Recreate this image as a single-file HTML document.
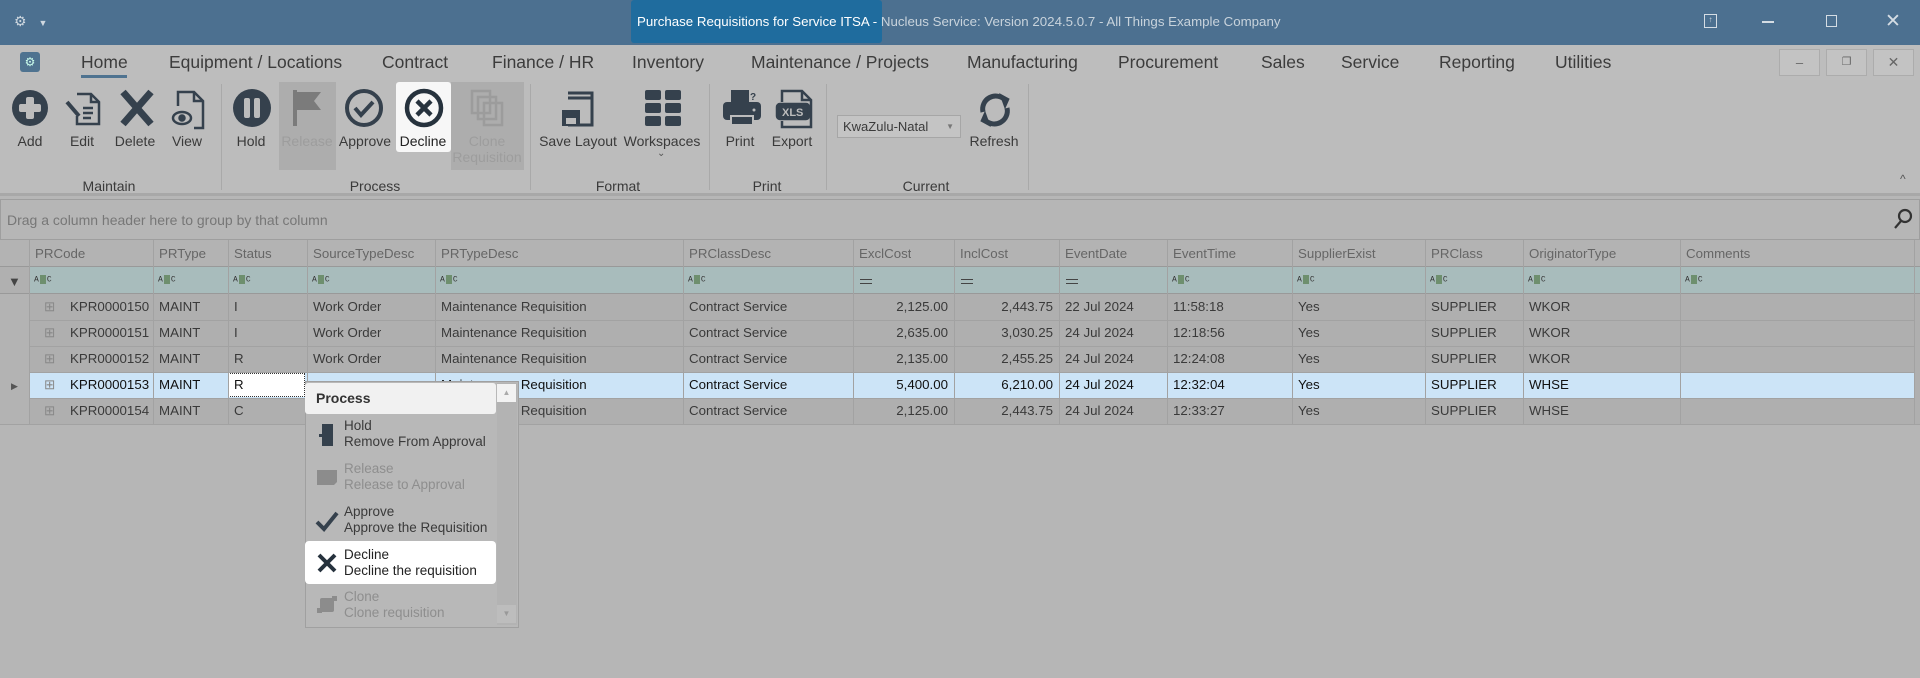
<!DOCTYPE html>
<html><head><meta charset="utf-8"><style>
*{box-sizing:border-box;margin:0;padding:0}
body{width:1920px;height:678px;overflow:hidden;background:#b6b6b6;font-family:"Liberation Sans",sans-serif;color:#3a3a3a;position:relative}
.a{position:absolute}
.title{left:0;top:0;width:1920px;height:45px;background:#4c7090}
.tabs{left:0;top:45px;width:1920px;height:35px;background:#bdbdbd}
.tab{position:absolute;top:52px;font-size:17.5px;color:#3c3c3c}
.rib{left:0;top:80px;width:1920px;height:116px;background:#bcbcbc;border-bottom:3px solid #a8a8a8}
.lbl{position:absolute;top:133px;font-size:14px;color:#3a3a3a;text-align:center;width:80px;margin-left:-40px}
.glbl{position:absolute;top:178px;font-size:14px;color:#3a3a3a;text-align:center;width:100px;margin-left:-50px}
.sep{position:absolute;top:84px;width:1px;height:106px;background:#a9a9a9}
.ic{position:absolute;top:88px}
.cell{position:absolute;font-size:13.3px;white-space:nowrap;overflow:hidden;padding-left:6px;line-height:26px;height:26px}
.r{text-align:right;padding-right:6px;padding-left:0}
.vl{position:absolute;width:1px;background:#a2a2a2}
.abc{display:inline-block;font-size:8px;font-family:"Liberation Mono",monospace;color:#333;vertical-align:middle}
.abc b{display:inline-block;width:6px;height:9px;background:#6e8f6e;margin:0 1px;vertical-align:middle}
.pm{position:absolute;font-size:13.5px;left:344px;line-height:16px}
</style></head><body>
<div class="a title"></div>
<div class="a" style="left:631px;top:0;width:251px;height:43px;background:#1f6c9e;border-radius:3px"></div>
<div class="a" style="left:14px;top:13px;font-size:14px;color:#cfd8e0">⚙ <span style="font-size:9px;margin-left:8px">▼</span></div>
<div class="a" style="left:637px;top:14px;font-size:13.3px;color:#fff;white-space:nowrap">Purchase Requisitions for Service ITSA - <span style="color:#c8d3dc">Nucleus Service: Version 2024.5.0.7 - All Things Example Company</span></div>
<div class="a" style="left:1704px;top:14px;width:13px;height:14px;border:1.5px solid #d5dde4;font-size:8px;color:#d5dde4;text-align:center;line-height:10px">↑</div>
<div class="a" style="left:1762px;top:21px;width:12px;height:1.5px;background:#d5dde4"></div>
<div class="a" style="left:1826px;top:15px;width:11px;height:12px;border:1.5px solid #d5dde4"></div>
<div class="a" style="left:1885px;top:10px;font-size:19px;color:#d5dde4">✕</div>

<div class="a tabs"></div>
<div class="a" style="left:20px;top:52px;width:20px;height:20px;background:#4f7390;border-radius:3px;color:#cfe;font-size:12px;text-align:center;line-height:20px">⚙</div>
<div class="tab" style="left:81px">Home</div>
<div class="a" style="left:81px;top:75px;width:46px;height:3px;background:#4f7390"></div>
<div class="tab" style="left:169px">Equipment / Locations</div>
<div class="tab" style="left:382px">Contract</div>
<div class="tab" style="left:492px">Finance / HR</div>
<div class="tab" style="left:632px">Inventory</div>
<div class="tab" style="left:751px">Maintenance / Projects</div>
<div class="tab" style="left:967px">Manufacturing</div>
<div class="tab" style="left:1118px">Procurement</div>
<div class="tab" style="left:1261px">Sales</div>
<div class="tab" style="left:1341px">Service</div>
<div class="tab" style="left:1439px">Reporting</div>
<div class="tab" style="left:1555px">Utilities</div>
<div class="a" style="left:1779px;top:49px;width:41px;height:27px;border:1px solid #acacac;background:#c3c3c3;text-align:center;font-size:13px;line-height:25px;color:#666">–</div>
<div class="a" style="left:1826px;top:49px;width:41px;height:27px;border:1px solid #acacac;background:#c3c3c3;text-align:center;font-size:11px;line-height:25px;color:#666">❐</div>
<div class="a" style="left:1873px;top:49px;width:41px;height:27px;border:1px solid #acacac;background:#c3c3c3;text-align:center;font-size:14px;line-height:25px;color:#666">✕</div>

<div class="a rib"></div>
<div class="a" style="left:279px;top:82px;width:57px;height:88px;background:#adadad"></div>
<div class="a" style="left:451px;top:82px;width:73px;height:88px;background:#adadad"></div>
<div class="a" style="left:396px;top:82px;width:55px;height:70px;background:#f7f7f7;border-radius:3px"></div>
<svg class="ic" style="left:11px" width="38" height="40" viewBox="0 0 38 40"><circle cx="19" cy="20" r="18" fill="#35414d"/><rect x="15" y="9" width="8" height="22" rx="2" fill="#bcbcbc"/><rect x="8" y="16" width="22" height="8" rx="2" fill="#bcbcbc"/></svg>
<svg class="ic" style="left:63px" width="40" height="40" viewBox="0 0 40 40" fill="none" stroke="#35414d" stroke-width="2.5"><path d="M14 6h14l8 8v22H14v-8"/><path d="M28 6v8h8"/><path d="M20 20h10M20 25h10M20 30h8"/><path d="M4 14l12 14" stroke-width="4"/></svg>
<svg class="ic" style="left:117px" width="40" height="40" viewBox="0 0 40 40"><path d="M6 4l28 32M34 4L6 36" stroke="#35414d" stroke-width="7"/></svg>
<svg class="ic" style="left:170px" width="36" height="42" viewBox="0 0 36 42" fill="none" stroke="#35414d" stroke-width="2.5"><path d="M8 18V4h16l9 9v27h-9"/><path d="M24 4v9h9"/><ellipse cx="12" cy="30" rx="9" ry="6"/><circle cx="12" cy="30" r="2.5" fill="#35414d"/></svg>
<svg class="ic" style="left:232px" width="40" height="40" viewBox="0 0 40 40"><circle cx="20" cy="20" r="19" fill="#35414d"/><rect x="12" y="10" width="6" height="20" rx="2" fill="#bcbcbc"/><rect x="22" y="10" width="6" height="20" rx="2" fill="#bcbcbc"/></svg>
<svg class="ic" style="left:290px" width="36" height="40" viewBox="0 0 36 40"><rect x="3" y="2" width="4" height="36" fill="#7b7b7b"/><path d="M7 4h24l-7 9 7 9H7z" fill="#7b7b7b"/></svg>
<svg class="ic" style="left:344px" width="40" height="40" viewBox="0 0 40 40" fill="none" stroke="#35414d"><circle cx="20" cy="20" r="17" stroke-width="4"/><path d="M11 20l6 7 12-13" stroke-width="4"/></svg>
<svg class="ic" style="left:404px" width="40" height="40" viewBox="0 0 40 40" fill="none" stroke="#26323d"><circle cx="20" cy="20" r="17" stroke-width="4.5"/><path d="M13 13l14 14M27 13L13 27" stroke-width="4.5"/></svg>
<svg class="ic" style="left:468px" width="40" height="42" viewBox="0 0 40 42" fill="none" stroke="#9c9c9c" stroke-width="2.5"><rect x="4" y="3" width="18" height="22"/><rect x="10" y="9" width="18" height="22"/><rect x="16" y="15" width="18" height="22"/></svg>
<svg class="ic" style="left:558px" width="38" height="42" viewBox="0 0 38 42" fill="none" stroke="#35414d" stroke-width="3"><path d="M10 5h24v32H10"/><path d="M10 5h24v5H10"/><rect x="4" y="22" width="18" height="16" fill="#35414d" stroke="none"/><rect x="8" y="30" width="10" height="6" fill="#bcbcbc" stroke="none"/></svg>
<svg class="ic" style="left:643px" width="40" height="40" viewBox="0 0 40 40" fill="#35414d"><rect x="2" y="2" width="16" height="10" rx="2"/><rect x="22" y="2" width="16" height="10" rx="2"/><rect x="2" y="15" width="16" height="10" rx="2"/><rect x="22" y="15" width="16" height="10" rx="2"/><rect x="2" y="28" width="16" height="10" rx="2"/><rect x="22" y="28" width="16" height="10" rx="2"/></svg>
<svg class="ic" style="left:721px" width="42" height="40" viewBox="0 0 42 40" fill="#35414d"><rect x="10" y="2" width="18" height="12"/><rect x="2" y="14" width="38" height="18" rx="4"/><rect x="10" y="28" width="22" height="9" fill="#35414d" stroke="#bcbcbc" stroke-width="2"/><text x="29" y="12" font-size="10" font-family="Liberation Sans" font-weight="bold">?</text><circle cx="33" cy="22" r="1.5" fill="#bcbcbc"/></svg>
<svg class="ic" style="left:774px" width="40" height="42" viewBox="0 0 40 42" fill="none" stroke="#35414d" stroke-width="2.5"><path d="M8 14V3h20l9 9v27H8v-6"/><path d="M28 3v9h9"/><rect x="3" y="16" width="32" height="15" rx="3" fill="#35414d"/><text x="8" y="28" font-size="11" font-weight="bold" font-family="Liberation Sans" fill="#bcbcbc" stroke="none">XLS</text></svg>
<svg class="ic" style="left:975px;top:90px" width="40" height="40" viewBox="0 0 40 40" fill="none" stroke="#35414d" stroke-width="5"><path d="M8 22A13 13 0 0 1 30 10"/><path d="M32 18A13 13 0 0 1 10 30"/><path d="M25 4l9 5-4 9z" fill="#35414d" stroke-width="1"/><path d="M15 36l-9-5 4-9z" fill="#35414d" stroke-width="1"/></svg>
<div class="a" style="left:837px;top:115px;width:124px;height:23px;border:1px solid #a6a6a6;background:#c4c4c4;font-size:13px;line-height:21px;padding-left:5px">KwaZulu-Natal<span style="position:absolute;right:6px;font-size:8px;color:#777">▼</span></div>
<div class="lbl" style="left:30px">Add</div>
<div class="lbl" style="left:82px">Edit</div>
<div class="lbl" style="left:135px">Delete</div>
<div class="lbl" style="left:187px">View</div>
<div class="lbl" style="left:251px">Hold</div>
<div class="lbl" style="left:307px;color:#9d9d9d">Release</div>
<div class="lbl" style="left:365px">Approve</div>
<div class="lbl" style="left:423px;color:#222">Decline</div>
<div class="lbl" style="left:487px;color:#9d9d9d;line-height:16px;top:133px">Clone<br>Requisition</div>
<div class="lbl" style="left:578px">Save Layout</div>
<div class="lbl" style="left:662px">Workspaces</div>
<div class="a" style="left:657px;top:148px;font-size:10px;color:#555">⌄</div>
<div class="lbl" style="left:740px">Print</div>
<div class="lbl" style="left:792px">Export</div>
<div class="lbl" style="left:994px">Refresh</div>
<div class="sep" style="left:221px"></div><div class="sep" style="left:530px"></div><div class="sep" style="left:709px"></div><div class="sep" style="left:826px"></div><div class="sep" style="left:1028px"></div>
<div class="glbl" style="left:109px">Maintain</div>
<div class="glbl" style="left:375px">Process</div>
<div class="glbl" style="left:618px">Format</div>
<div class="glbl" style="left:767px">Print</div>
<div class="glbl" style="left:926px">Current</div>
<div class="a" style="left:1900px;top:172px;font-size:12px;color:#555">^</div>

<div class="a" style="left:0;top:199px;width:1920px;height:41px;background:#b6b6b6;border:1px solid #9e9e9e"></div>
<div class="a" style="left:7px;top:212px;font-size:14px;color:#777">Drag a column header here to group by that column</div>
<svg class="a" style="left:1893px;top:208px" width="20" height="22" viewBox="0 0 20 22" fill="none" stroke="#333" stroke-width="2.2"><circle cx="12" cy="8" r="6"/><path d="M8 13l-6 7"/></svg>

<div class="a" style="left:0;top:240px;width:1920px;height:27px;background:#b3b3b3;border-bottom:1px solid #999"></div>
<div class="a" style="left:0;top:267px;width:1920px;height:27px;background:#a8bcbc;border-bottom:1px solid #999"></div>
<div class="a" style="left:0;top:267px;width:29px;height:27px;background:#b0b0b0;border-bottom:1px solid #999"></div>
<div class="a" style="left:0;top:294px;width:1920px;height:130px;background:#afafaf"></div>
<div class="a" style="left:0;top:294px;width:29px;height:130px;background:#b3b3b3"></div>
<div class="a" style="left:29px;top:372px;width:1885px;height:26px;background:#cce4f7"></div>
<div class="a" style="left:228px;top:373px;width:77px;height:24px;background:#fff;border:1px dotted #333"></div>
<div class="a" style="left:11px;top:381px;font-size:9px;color:#555">▶</div>
<div class="a" style="left:8px;top:274px;font-size:13px;color:#444">▼</div>

<div class="a" style="left:0;top:241px;width:1920px;height:183px">
<div class="cell" style="left:29px;top:0;color:#666">PRCode</div>
<div class="cell" style="left:153px;top:0;color:#666">PRType</div>
<div class="cell" style="left:228px;top:0;color:#666">Status</div>
<div class="cell" style="left:307px;top:0;color:#666">SourceTypeDesc</div>
<div class="cell" style="left:435px;top:0;color:#666">PRTypeDesc</div>
<div class="cell" style="left:683px;top:0;color:#666">PRClassDesc</div>
<div class="cell" style="left:853px;top:0;color:#666">ExclCost</div>
<div class="cell" style="left:954px;top:0;color:#666">InclCost</div>
<div class="cell" style="left:1059px;top:0;color:#666">EventDate</div>
<div class="cell" style="left:1167px;top:0;color:#666">EventTime</div>
<div class="cell" style="left:1292px;top:0;color:#666">SupplierExist</div>
<div class="cell" style="left:1425px;top:0;color:#666">PRClass</div>
<div class="cell" style="left:1523px;top:0;color:#666">OriginatorType</div>
<div class="cell" style="left:1680px;top:0;color:#666">Comments</div>
</div>
<div class="a" style="left:0;top:267px;width:1920px;height:27px;font-size:9px">
<span class="a abc" style="left:34px;top:8px">A<b></b>C</span><span class="a abc" style="left:158px;top:8px">A<b></b>C</span><span class="a abc" style="left:233px;top:8px">A<b></b>C</span><span class="a abc" style="left:312px;top:8px">A<b></b>C</span><span class="a abc" style="left:440px;top:8px">A<b></b>C</span><span class="a abc" style="left:688px;top:8px">A<b></b>C</span>
<span class="a" style="left:860px;top:12px;width:12px;height:5px;border-top:1.5px solid #444;border-bottom:1.5px solid #444"></span><span class="a" style="left:961px;top:12px;width:12px;height:5px;border-top:1.5px solid #444;border-bottom:1.5px solid #444"></span><span class="a" style="left:1066px;top:12px;width:12px;height:5px;border-top:1.5px solid #444;border-bottom:1.5px solid #444"></span>
<span class="a abc" style="left:1172px;top:8px">A<b></b>C</span><span class="a abc" style="left:1297px;top:8px">A<b></b>C</span><span class="a abc" style="left:1430px;top:8px">A<b></b>C</span><span class="a abc" style="left:1528px;top:8px">A<b></b>C</span><span class="a abc" style="left:1685px;top:8px">A<b></b>C</span>
</div>

<div class="vl" style="left:29px;top:240px;height:184px"></div><div class="vl" style="left:153px;top:240px;height:184px"></div><div class="vl" style="left:228px;top:240px;height:184px"></div><div class="vl" style="left:307px;top:240px;height:184px"></div><div class="vl" style="left:435px;top:240px;height:184px"></div><div class="vl" style="left:683px;top:240px;height:184px"></div><div class="vl" style="left:853px;top:240px;height:184px"></div><div class="vl" style="left:954px;top:240px;height:184px"></div><div class="vl" style="left:1059px;top:240px;height:184px"></div><div class="vl" style="left:1167px;top:240px;height:184px"></div><div class="vl" style="left:1292px;top:240px;height:184px"></div><div class="vl" style="left:1425px;top:240px;height:184px"></div><div class="vl" style="left:1523px;top:240px;height:184px"></div><div class="vl" style="left:1680px;top:240px;height:184px"></div><div class="vl" style="left:1914px;top:240px;height:184px"></div>
<div class="a" style="left:29px;top:320px;width:1885px;height:1px;background:#a2a2a2"></div>
<div class="a" style="left:29px;top:346px;width:1885px;height:1px;background:#a2a2a2"></div>
<div class="a" style="left:29px;top:372px;width:1885px;height:1px;background:#a2a2a2"></div>
<div class="a" style="left:29px;top:398px;width:1885px;height:1px;background:#a2a2a2"></div>
<div class="a" style="left:0;top:424px;width:1920px;height:1px;background:#a2a2a2"></div>

<div class="a" style="left:0;top:294px;width:1920px">
<div class="cell" style="left:38px;top:0;color:#888">⊞</div><div class="cell" style="left:64px;top:0">KPR0000150</div><div class="cell" style="left:153px;top:0">MAINT</div><div class="cell" style="left:228px;top:0">I</div><div class="cell" style="left:307px;top:0">Work Order</div><div class="cell" style="left:435px;top:0">Maintenance Requisition</div><div class="cell" style="left:683px;top:0">Contract Service</div><div class="cell r" style="left:853px;top:0;width:101px">2,125.00</div><div class="cell r" style="left:954px;top:0;width:105px">2,443.75</div><div class="cell" style="left:1059px;top:0">22 Jul 2024</div><div class="cell" style="left:1167px;top:0">11:58:18</div><div class="cell" style="left:1292px;top:0">Yes</div><div class="cell" style="left:1425px;top:0">SUPPLIER</div><div class="cell" style="left:1523px;top:0">WKOR</div>

<div class="cell" style="left:38px;top:26px;color:#888">⊞</div><div class="cell" style="left:64px;top:26px">KPR0000151</div><div class="cell" style="left:153px;top:26px">MAINT</div><div class="cell" style="left:228px;top:26px">I</div><div class="cell" style="left:307px;top:26px">Work Order</div><div class="cell" style="left:435px;top:26px">Maintenance Requisition</div><div class="cell" style="left:683px;top:26px">Contract Service</div><div class="cell r" style="left:853px;top:26px;width:101px">2,635.00</div><div class="cell r" style="left:954px;top:26px;width:105px">3,030.25</div><div class="cell" style="left:1059px;top:26px">24 Jul 2024</div><div class="cell" style="left:1167px;top:26px">12:18:56</div><div class="cell" style="left:1292px;top:26px">Yes</div><div class="cell" style="left:1425px;top:26px">SUPPLIER</div><div class="cell" style="left:1523px;top:26px">WKOR</div>

<div class="cell" style="left:38px;top:52px;color:#888">⊞</div><div class="cell" style="left:64px;top:52px">KPR0000152</div><div class="cell" style="left:153px;top:52px">MAINT</div><div class="cell" style="left:228px;top:52px">R</div><div class="cell" style="left:307px;top:52px">Work Order</div><div class="cell" style="left:435px;top:52px">Maintenance Requisition</div><div class="cell" style="left:683px;top:52px">Contract Service</div><div class="cell r" style="left:853px;top:52px;width:101px">2,135.00</div><div class="cell r" style="left:954px;top:52px;width:105px">2,455.25</div><div class="cell" style="left:1059px;top:52px">24 Jul 2024</div><div class="cell" style="left:1167px;top:52px">12:24:08</div><div class="cell" style="left:1292px;top:52px">Yes</div><div class="cell" style="left:1425px;top:52px">SUPPLIER</div><div class="cell" style="left:1523px;top:52px">WKOR</div>

<div style="color:#111">
<div class="cell" style="left:38px;top:78px;color:#888">⊞</div><div class="cell" style="left:64px;top:78px">KPR0000153</div><div class="cell" style="left:153px;top:78px">MAINT</div><div class="cell" style="left:228px;top:78px">R</div><div class="cell" style="left:435px;top:78px">Maintenance Requisition</div><div class="cell" style="left:683px;top:78px">Contract Service</div><div class="cell r" style="left:853px;top:78px;width:101px">5,400.00</div><div class="cell r" style="left:954px;top:78px;width:105px">6,210.00</div><div class="cell" style="left:1059px;top:78px">24 Jul 2024</div><div class="cell" style="left:1167px;top:78px">12:32:04</div><div class="cell" style="left:1292px;top:78px">Yes</div><div class="cell" style="left:1425px;top:78px">SUPPLIER</div><div class="cell" style="left:1523px;top:78px">WHSE</div>
</div>

<div class="cell" style="left:38px;top:104px;color:#888">⊞</div><div class="cell" style="left:64px;top:104px">KPR0000154</div><div class="cell" style="left:153px;top:104px">MAINT</div><div class="cell" style="left:228px;top:104px">C</div><div class="cell" style="left:435px;top:104px">Maintenance Requisition</div><div class="cell" style="left:683px;top:104px">Contract Service</div><div class="cell r" style="left:853px;top:104px;width:101px">2,125.00</div><div class="cell r" style="left:954px;top:104px;width:105px">2,443.75</div><div class="cell" style="left:1059px;top:104px">24 Jul 2024</div><div class="cell" style="left:1167px;top:104px">12:33:27</div><div class="cell" style="left:1292px;top:104px">Yes</div><div class="cell" style="left:1425px;top:104px">SUPPLIER</div><div class="cell" style="left:1523px;top:104px">WHSE</div>
</div>

<div class="a" style="left:305px;top:381px;width:214px;height:247px;background:#b8b8b8;border:1px solid #a0a0a0"></div>
<div class="a" style="left:497px;top:383px;width:20px;height:242px;background:#b3b3b3"></div>
<div class="a" style="left:497px;top:384px;width:19px;height:18px;background:#f2f2f2;font-size:8px;color:#aaa;text-align:center;line-height:18px">▲</div>
<div class="a" style="left:497px;top:605px;width:19px;height:18px;background:#bdbdbd;font-size:8px;color:#999;text-align:center;line-height:18px">▼</div>
<div class="a" style="left:305px;top:383px;width:191px;height:31px;background:#f1f1f1;border-radius:3px;font-size:14px;font-weight:bold;line-height:31px;padding-left:11px;color:#333">Process</div>
<div class="a" style="left:305px;top:541px;width:191px;height:43px;background:#fff;border-radius:4px"></div>
<svg class="a" style="left:317px;top:423px" width="20" height="24" viewBox="0 0 20 24"><rect x="5" y="1" width="11" height="22" fill="#35414d"/><rect x="2" y="11" width="3" height="3" fill="#35414d"/></svg>
<svg class="a" style="left:316px;top:466px" width="22" height="22" viewBox="0 0 22 22"><path d="M1 4h20v12l-3 3H1z" fill="#8c8c8c"/></svg>
<svg class="a" style="left:315px;top:509px" width="24" height="24" viewBox="0 0 24 24" fill="none"><path d="M2 13l7 7L22 4" stroke="#35414d" stroke-width="4"/></svg>
<svg class="a" style="left:316px;top:552px" width="22" height="22" viewBox="0 0 22 22"><path d="M3 3l16 16M19 3L3 19" stroke="#26323d" stroke-width="4"/></svg>
<svg class="a" style="left:316px;top:594px" width="22" height="22" viewBox="0 0 22 22"><rect x="4" y="4" width="14" height="14" rx="2" fill="#8c8c8c"/><rect x="1" y="14" width="5" height="5" fill="#8c8c8c"/><rect x="16" y="2" width="5" height="5" fill="#8c8c8c"/></svg>
<div class="pm" style="top:418px;color:#3a3a3a">Hold<br>Remove From Approval</div>
<div class="pm" style="top:461px;color:#8e8e8e">Release<br>Release to Approval</div>
<div class="pm" style="top:504px;color:#3a3a3a">Approve<br>Approve the Requisition</div>
<div class="pm" style="top:547px;color:#222">Decline<br>Decline the requisition</div>
<div class="pm" style="top:589px;color:#8e8e8e">Clone<br>Clone requisition</div>
</body></html>
